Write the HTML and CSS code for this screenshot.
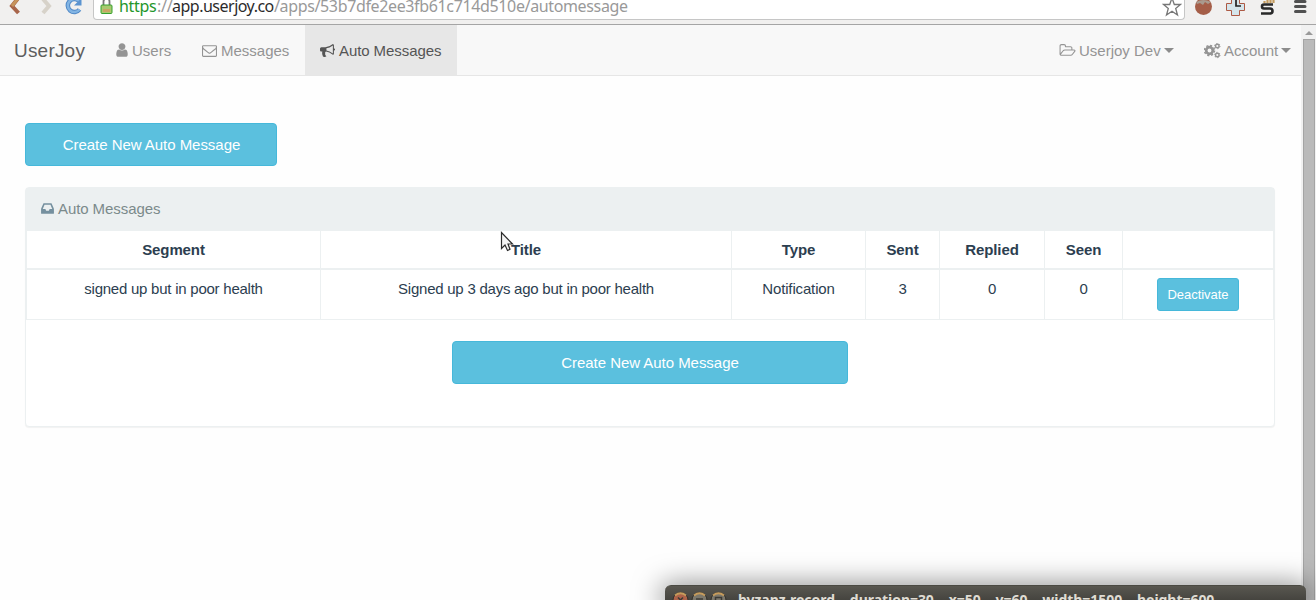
FILE: index.html
```html
<!DOCTYPE html>
<html lang="en">
<head>
<meta charset="utf-8">
<title>UserJoy</title>
<link rel="stylesheet" href="styles.css">
</head>
<body>
<header class="chrome">
  <svg class="chrome-nav" width="94" height="24" viewBox="0 0 94 24">
    <path d="M17.500-1L12 6L18.500 13" fill="none" stroke="#a8654a" stroke-width="4"/>
    <path d="M17.500-1L12 6" fill="none" stroke="#c6945c" stroke-width="3"/>
    <path d="M43-1L49 6L43 13" fill="none" stroke="#d7d2c9" stroke-width="4"/>
    <path d="M79.500 9.500A6.500 6.500 0 1 1 79 1" fill="none" stroke="#4e87c6" stroke-width="4.500"/>
    <path d="M79.500 9.500A6.500 6.500 0 1 1 79 1" fill="none" stroke="#82b4e3" stroke-width="2.500"/>
    <path d="M74 5.500H81.500V-2Z" fill="#5b93d0"/>
  </svg>
  <div class="address">
    <svg class="lock" width="13" height="14" viewBox="0 0 13 14">
      <path d="M3.500 6V1.500A3 3 0 0 1 9.500 1.500V6" fill="none" stroke="#777" stroke-width="1.800"/>
      <rect x="1" y="5" width="11" height="8.500" rx="1" fill="#a8c96f" stroke="#36a12f"/>
      <rect x="3" y="9" width="7" height="3" fill="#c8a565"/>
    </svg>
    <div class="url"><span class="scheme">https</span><span class="slashes">://</span><span class="host">app.userjoy.co</span><span class="path">/apps/53b7dfe2ee3fb61c714d510e/automessage</span></div>
    <svg class="star" width="20" height="18" viewBox="0 0 20 18"><path d="M10-2L12.300 4.500H18.500L13.700 8.500L15.500 15L10 11.200L4.500 15L6.300 8.500L1.500 4.500H7.700Z" fill="#fff" stroke="#777" stroke-width="1.300"/></svg>
  </div>
  <svg class="extensions" width="131" height="24" viewBox="1185 0 131 24">
    <ellipse cx="1203.500" cy="6.500" rx="8.500" ry="8.500" fill="#a55e48"/>
    <path d="M1196 2Q1203-2 1211 2L1208 4L1205 2L1203 5L1200 3L1197 4Z" fill="#a99a8e"/>
    <path d="M1231.500-1V3.500H1226.500V10.500H1231.500V15.500H1239.500V10.500H1244.500V3.500H1239.500V-1Z" fill="#d5e5eb" stroke="#ad5a45"/>
    <path d="M1236 0V6H1241" fill="none" stroke="#222" stroke-width="1.700"/>
    <path d="M1273 4.500H1264Q1262 4.500 1262 6.500Q1262 8.500 1264 8.500H1270Q1272.500 8.500 1272.500 11Q1272.500 13.500 1270 13.500H1261" fill="none" stroke="#292929" stroke-width="2.600"/>
    <path d="M1264.500 1V3M1267.500 0V3M1270.500 0V3M1273.500 0V3" stroke="#c49b5d" stroke-width="2.200"/>
    <path d="M1295.500 1.500H1305M1295.500 6.500H1305M1295.500 11.500H1305" stroke="#505050" stroke-width="3" stroke-linecap="round"/>
  </svg>
</header>
<div class="viewport">
  <div class="page">
    <nav class="navbar">
      <a class="brand">UserJoy</a>
      <a class="nav-item users"><svg class="fa" width="16" height="16" viewBox="0 0 1792 1792"><path d="M1536 1399q0 109-62.500 187t-150.500 78h-854q-88 0-150.500-78t-62.500-187q0-85 8.500-160.500t31.500-152 58.500-131 94-89 134.500-34.500q131 128 313 128t313-128q76 0 134.500 34.500t94 89 58.500 131 31.500 152 8.500 160.500zm-256-887q0 159-112.500 271.500t-271.500 112.500-271.500-112.500-112.500-271.500 112.500-271.500 271.500-112.500 271.500 112.500 112.500 271.500z"/></svg><span>Users</span></a>
      <a class="nav-item messages"><svg class="fa" width="15" height="15" viewBox="0 0 1792 1792"><path d="M1664 1504v-768q-32 36-69 66-268 206-426 338-51 43-83 67t-86.500 48.500-102.500 24.500h-2q-48 0-102.500-24.500t-86.500-48.500-83-67q-158-132-426-338-37-30-69-66v768q0 13 9.500 22.500t22.500 9.500h1472q13 0 22.500-9.500t9.500-22.500zm0-1051v-24.500l-.5-13-3-12.500-5.500-9-9-7.500-14-2.500h-1472q-13 0-22.500 9.500t-9.500 22.500q0 168 147 284 193 152 401 317 6 5 35 29.500t46 37.500 44.500 31.500 50.500 27.500 43 9h2q20 0 43-9t50.500-27.500 44.500-31.500 46-37.500 35-29.500q208-165 401-317 54-43 100.500-115.500t46.500-131.500zm128-37v1088q0 66-47 113t-113 47h-1472q-66 0-113-47t-47-113v-1088q0-66 47-113t113-47h1472q66 0 113 47t47 113z"/></svg><span>Messages</span></a>
      <a class="nav-item active"><svg class="fa" width="15" height="15" viewBox="0 0 1792 1792"><path d="M1664 640q53 0 90.500 37.500t37.500 90.500-37.500 90.500-90.500 37.500v384q0 52-38 90t-90 38q-417-347-812-380-58 19-91 66t-31 100.500 40 92.500q-20 33-23 65.500t6 58 33.500 55 48 50 61.500 50.500q-29 58-111.500 83t-168.500 11.500-132-55.500q-7-23-29.500-87.500t-32-94.500-23-89-15-101 3.500-98 22-110.500h-122q-66 0-113-47t-47-113v-192q0-66 47-113t113-47h480q435 0 896-384 52 0 90 38t38 90v384zm-128 604v-954q-394 302-768 343v270q377 42 768 341z"/></svg><span>Auto Messages</span></a>
      <div class="nav-right">
        <a class="nav-item app"><svg class="fa" width="17" height="15" viewBox="0 0 2031 1792"><path d="M1845 931q0-35-53-35h-1088q-40 0-85.500 21.500t-71.500 52.500l-294 363q-18 24-18 40 0 35 53 35h1088q40 0 86-22t71-53l294-363q18-22 18-39zm-1141-163h768v-160q0-40-28-68t-68-28h-576q-40 0-68-28t-28-68v-64q0-40-28-68t-68-28h-320q-40 0-68 28t-28 68v853l256-315q44-53 116-87.500t140-34.500zm1269 163q0 62-46 120l-295 363q-43 53-116 87.500t-140 34.500h-1088q-92 0-158-66t-66-158v-960q0-92 66-158t158-66h320q92 0 158 66t66 158v32h544q92 0 158 66t66 158v160h192q54 0 99 24.500t67 70.500q15 32 15 68z"/></svg><span>Userjoy Dev</span><i class="caret"></i></a>
        <a class="nav-item account"><svg class="fa" width="17" height="16" viewBox="0 0 17 16"><g fill="none" stroke="currentColor"><circle cx="5.500" cy="7.500" r="3.300" stroke-width="2.700"/><circle cx="5.500" cy="7.500" r="5" stroke-width="1.500" stroke-dasharray="2.100 1.827"/><circle cx="13.300" cy="3" r="1.800" stroke-width="1.400"/><circle cx="13.300" cy="3" r="2.700" stroke-width="1" stroke-dasharray="1.300 1.527"/><circle cx="13.300" cy="12" r="1.800" stroke-width="1.400"/><circle cx="13.300" cy="12" r="2.700" stroke-width="1" stroke-dasharray="1.300 1.527"/></g></svg><span>Account</span><i class="caret"></i></a>
      </div>
    </nav>
    <main class="content">
      <button class="btn btn-top">Create New Auto Message</button>
      <section class="panel">
        <h2 class="panel-heading"><svg class="fa" width="15" height="15" viewBox="0 0 1792 1792"><path d="M1151 960h316q-1-3-2.500-8.500t-2.500-7.500l-212-496h-708l-212 496q-1 3-2.500 8.500t-2.500 7.500h316l95 192h320zm513 30v482q0 26-19 45t-45 19h-1408q-26 0-45-19t-19-45v-482q0-62 25-123l238-552q10-25 36.500-42t52.500-17h832q26 0 52.500 17t36.500 42l238 552q25 61 25 123z"/></svg><span>Auto Messages</span></h2>
        <table class="grid">
          <colgroup><col class="c-segment"><col class="c-title"><col class="c-type"><col class="c-sent"><col class="c-replied"><col class="c-seen"><col></colgroup>
          <thead><tr><th>Segment</th><th>Title</th><th>Type</th><th>Sent</th><th>Replied</th><th>Seen</th><th></th></tr></thead>
          <tbody><tr><td>signed up but in poor health</td><td>Signed up 3 days ago but in poor health</td><td class="plain">Notification</td><td>3</td><td>0</td><td>0</td><td><button class="btn btn-small">Deactivate</button></td></tr></tbody>
        </table>
        <button class="btn btn-center">Create New Auto Message</button>
      </section>
    </main>
  </div>
  <aside class="scrollbar"><i class="scroll-up"></i><div class="thumb"></div></aside>
</div>
<svg class="cursor" width="14" height="21" viewBox="0 0 14 21"><path d="M1.500 1.500V17.500L5 14L7.500 19.500L10 18.300L8 13H12.500Z" fill="#f4f4f4" stroke="#2b2b2b" stroke-width="1.200"/></svg>
<div class="window">
  <svg class="window-buttons" width="56" height="14" viewBox="0 0 56 14">
    <g stroke="#33312c"><circle cx="8.500" cy="14" r="7.500" fill="#ad6249"/><circle cx="27.500" cy="14" r="7.500" fill="#7c786c"/><circle cx="46.500" cy="14" r="7.500" fill="#7c786c"/></g>
    <path d="M3 9.500Q8.500 5 14 9.500M22 9.500Q27.500 5 33 9.500M41 9.500Q46.500 5 52 9.500" fill="none" stroke="#c69c5c" stroke-width="1.800"/>
    <path d="M6 11.500L11 16.500M11 11.500L6 16.500M24 13H31M43.500 15V11.500H49.500V15" fill="none" stroke="#3c3b37" stroke-width="1.500"/>
  </svg>
  <div class="window-title"><span>byzanz-record</span><span>--duration=30</span><span>--x=50</span><span>--y=60</span><span>--width=1500</span><span>--height=600</span></div>
</div>
</body>
</html>
```
FILE: styles.css
```css
* { box-sizing: border-box; }
body { margin: 0; height: 600px; overflow: hidden; position: relative; background: #fefefe; font: 15px/21px "Liberation Sans", Arial, sans-serif; color: #2c3e50; }
svg { display: block; flex: none; }
.chrome { display: flex; height: 25px; background: #f1f0ef; border-bottom: 1px solid #a5a5a5; }
.chrome-nav { margin-right: -1px; }
.address { display: flex; width: 1092px; height: 20px; background: #fff; border: 1px solid #c6c6c6; border-top: 0; border-radius: 0 0 4px 4px; }
.lock { margin: 0 0 0 6px; }
.url { display: flex; flex: 1; margin-left: 6px; margin-top: -5px; height: 24px; font: 16px/23px "Noto Sans", sans-serif; color: #999; white-space: nowrap; }
.scheme { width: 38px; color: #23962b; letter-spacing: -.3px; }
.slashes { width: 15px; letter-spacing: -.3px; }
.host { width: 102px; color: #2b2b2b; letter-spacing: -.5px; }
.path { letter-spacing: -.36px; }
.star { margin-right: 2px; }
.viewport { display: flex; height: 575px; }
.page { flex: 1; }
.scrollbar { width: 15px; padding: 5px 2px 0; background: #f1f1f1; }
.scroll-up { display: block; width: 0; margin: 1px 0 4px 2px; border: 4px solid transparent; border-top: 0; border-bottom-color: #999; }
.thumb { width: 12px; height: 561px; background: #bababa; border: solid #a4a4a4; border-width: 1px 1px 0; }
.navbar { display: flex; height: 51px; background: #f8f8f8; border-bottom: 1px solid #e6e6e6; color: #949494; }
.brand { width: 101px; padding: 15px 0 0 14px; font-size: 19px; color: #5e5e5e; letter-spacing: .2px; }
.nav-item { display: flex; align-items: flex-start; padding: 15px; height: 50px; white-space: nowrap; }
.nav-item .fa { margin: 3px 4px 0 0; }
.users { width: 86px; padding-left: 13px; }
.users .fa { margin: 2px 2px 0 0; }
.messages { width: 118px; }
.active { width: 152px; background: #e7e7e7; color: #555; letter-spacing: -.08px; }
.nav-right { display: flex; margin-left: auto; }
.app { width: 145px; }
.account { width: 112px; }
.nav-right .nav-item .fa { margin-right: 3px; }
.caret { margin: 8px 0 0 3px; border: 5px solid transparent; border-top-color: #8c8c8c; border-bottom: 0; }
.fa { fill: currentColor; }
.content { display: flex; flex-direction: column; align-items: flex-start; padding: 47px 26px 0 25px; }
.btn { font: 15px/21px "Liberation Sans", Arial, sans-serif; color: #fff; background: #5bc0de; border: 1px solid #46b8da; border-radius: 4px; padding: 10px; letter-spacing: -.04px; }
.btn-top { width: 252px; height: 43px; padding-left: 11px; }
.panel { display: flex; flex-direction: column; width: 1250px; height: 240px; margin-top: 21px; background: #fff; border: 1px solid #ecf0f1; border-radius: 4px; box-shadow: 0 1px 1px rgba(0,0,0,.05); }
.panel-heading { display: flex; height: 43px; margin: 0; padding: 10px 14px; font-size: 15px; font-weight: normal; letter-spacing: -.08px; color: #7b8a8b; background: #ecf0f1; }
.panel-heading .fa { margin: 3px 3px 0 0; color: #75909f; }
.grid { width: 1248px; border-collapse: separate; border-spacing: 0; table-layout: fixed; border-left: 1px solid #ecf0f1; }
.c-segment { width: 294px; } .c-title { width: 411px; } .c-type { width: 134px; } .c-sent { width: 74px; } .c-replied { width: 105px; } .c-seen { width: 78px; }
.grid th, .grid td { text-align: center; vertical-align: top; padding: 8px; border: solid #ecf0f1; border-width: 0 1px 0 0; }
.grid th { height: 39px; border-bottom-width: 2px; letter-spacing: -.1px; }
.grid td { height: 50px; border-bottom-width: 1px; letter-spacing: -.24px; }
.grid .plain { letter-spacing: -.15px; }
.btn-small { display: block; width: 82px; height: 33px; margin: 0 auto; padding: 5px 0; font-size: 13px; border-radius: 3px; }
.btn-center { width: 396px; height: 43px; margin: 21px auto 0; }
.cursor { position: absolute; left: 500px; top: 231px; }
.window { position: absolute; left: 665px; top: 585px; width: 641px; height: 15px; display: flex; padding-left: 7px; background: linear-gradient(#595750, #45443f); border-top: 1px solid #4b4a43; border-radius: 6px 6px 0 0; box-shadow: 0 4px 28px 4px rgba(0,0,0,.5); }
.window-title { display: flex; gap: 6px; margin: 4px 0 0 10px; font: bold 14px/20px "Noto Sans", sans-serif; color: #dfdbd2; letter-spacing: -.04px; white-space: nowrap; }
```
